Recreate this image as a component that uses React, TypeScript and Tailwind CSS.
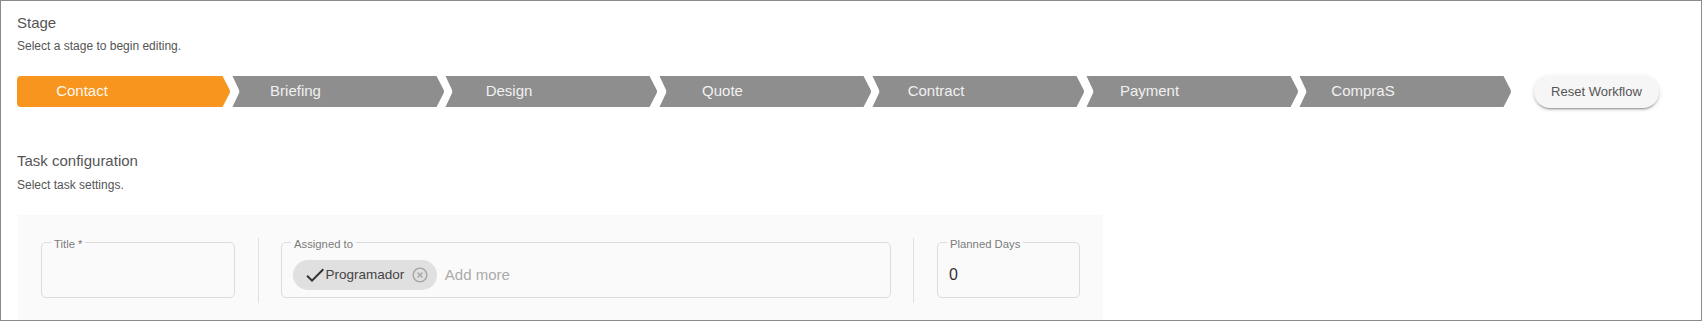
import React from "react";

const steps = ["Contact", "Briefing", "Design", "Quote", "Contract", "Payment", "CompraS"];

const FIRST_PATH =
  "M4 0 H205.5 L212.5 13.6 Q213.5 15.5 212.5 17.4 L205.5 31 H4 Q0 31 0 27 V4 Q0 0 4 0 Z";
const REST_PATH =
  "M1.5 0 H205.5 L212.5 13.6 Q213.5 15.5 212.5 17.4 L205.5 31 H1.5 L7.8 17.5 Q8.8 15.5 7.8 13.5 Z";

function Step({ label, index }: { label: string; index: number }) {
  const active = index === 0;
  return (
    <div className="relative h-[31px] w-[213.5px] shrink-0">
      <svg className="absolute inset-0" width="213.5" height="31" viewBox="0 0 213.5 31">
        <path d={active ? FIRST_PATH : REST_PATH} fill={active ? "#f7951f" : "#8e8e8e"} />
      </svg>
      <span
        className={
          "relative flex h-full w-[130px] items-center justify-center text-[15px] " +
          (active ? "text-[#fff7ec]" : "text-[#f1f1f1]")
        }
      >
        {label}
      </span>
    </div>
  );
}

function Field({
  label,
  className,
  children,
}: {
  label: string;
  className: string;
  children?: React.ReactNode;
}) {
  return (
    <div className={"relative h-[56px] shrink-0 rounded-[5px] border border-[#dcdcdc] bg-[#fafafa] " + className}>
      <span className="absolute -top-[5.5px] left-[9px] bg-[#fafafa] px-[3px] text-[11.3px] leading-[13px] text-[#7a7a7a]">
        {label}
      </span>
      {children}
    </div>
  );
}

export default function App() {
  return (
    <div className="h-[321px] w-[1702px] overflow-hidden border border-[#8a8a8a] bg-white pl-[16px] pt-[13px] font-['Liberation_Sans',Arial,sans-serif]">
      <div className="text-[15px] leading-[18px] text-[#555]">Stage</div>
      <div className="mt-[7px] text-[12px] leading-[15px] text-[#555]">Select a stage to begin editing.</div>

      <div className="mt-[22px] flex items-start">
        <div className="flex">
          {steps.map((s, i) => (
            <Step key={s} label={s} index={i} />
          ))}
        </div>
        <button className="ml-[22.5px] h-[32px] w-[125px] rounded-full bg-[#f6f6f6] text-[13px] text-[#555] shadow-[0_3px_1px_-2px_rgba(0,0,0,0.2),0_2px_2px_0_rgba(0,0,0,0.14),0_1px_5px_0_rgba(0,0,0,0.12)]">
          Reset Workflow
        </button>
      </div>

      <div className="mt-[44px] text-[15px] leading-[18px] text-[#555]">Task configuration</div>
      <div className="mt-[8px] text-[12px] leading-[15px] text-[#555]">Select task settings.</div>

      <div className="ml-[1px] mt-[22px] flex h-[120px] w-[1085px] items-start bg-[#fafafa] pl-[23px] pt-[27px]">
        <Field label="Title *" className="w-[194px]" />
        <div className="ml-[23px] mr-[22px] -mt-[4px] h-[65px] w-px shrink-0 bg-[#e0e0e0]" />
        <Field label="Assigned to" className="w-[610px]">
          <div className="flex items-center pl-[11px] pt-[17px]">
            <div className="flex h-[30px] items-center rounded-full bg-[#e0e0e0] pl-[10px] pr-[8px]">
              <svg width="24" height="24" viewBox="0 0 24 24" fill="#333">
                <path d="M9 16.17 4.83 12l-1.42 1.41L9 19 21 7l-1.41-1.41z" />
              </svg>
              <span className="-ml-[1.5px] text-[13.5px] text-[#444]">Programador</span>
              <svg className="ml-[6.5px]" width="18" height="18" viewBox="0 0 24 24" fill="#a8a8a8">
                <path d="M14.59 8 12 10.59 9.41 8 8 9.41 10.59 12 8 14.59 9.41 16 12 13.41 14.59 16 16 14.59 13.41 12 16 9.41zM12 2C6.47 2 2 6.47 2 12s4.47 10 10 10 10-4.47 10-10S17.53 2 12 2m0 18c-4.41 0-8-3.59-8-8s3.59-8 8-8 8 3.59 8 8-3.59 8-8 8" />
              </svg>
            </div>
            <span className="ml-[8px] text-[15px] text-[#ababab]">Add more</span>
          </div>
        </Field>
        <div className="ml-[22px] mr-[23px] -mt-[4px] h-[65px] w-px shrink-0 bg-[#e0e0e0]" />
        <Field label="Planned Days" className="w-[143px]">
          <div className="pl-[11px] pt-[22px] text-[16px] leading-[19px] text-[#333]">0</div>
        </Field>
      </div>
    </div>
  );
}
